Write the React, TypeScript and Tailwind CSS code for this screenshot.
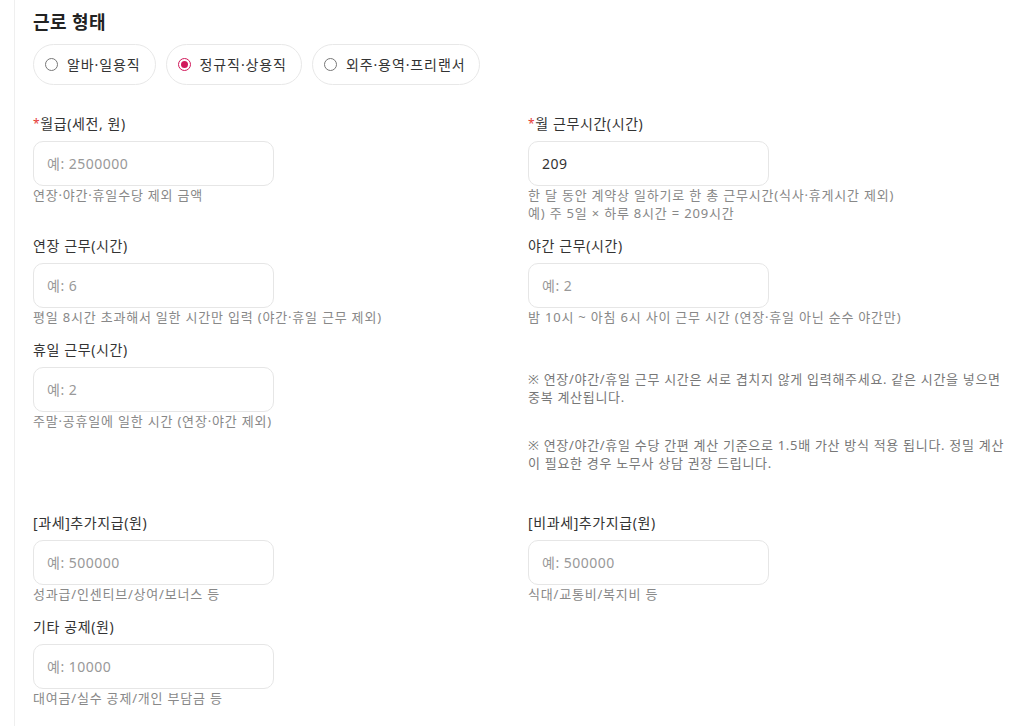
import { useState } from "react";

type Field = {
  label: string;
  required?: boolean;
  placeholder: string;
  value?: string;
  help?: string[];
};

function FieldBox({ field }: { field: Field }) {
  const [value, setValue] = useState(field.value ?? "");
  return (
    <div className="flex flex-col">
      <label className="text-[14px] leading-5 text-[#333] tracking-[0.6px]">
        {field.required && <span className="text-[#e53935] text-[12px] align-top">*</span>}
        {field.label}
      </label>
      <input
        type="text"
        value={value}
        onChange={(e) => setValue(e.target.value)}
        placeholder={field.placeholder}
        className="mt-[7px] w-[241px] h-[45px] rounded-[10px] border border-[#e6e6e6] bg-white px-[13px] text-[14px] tracking-[0.5px] text-[#333] placeholder:text-[#999] outline-none"
      />
      {field.help && (
        <div className="text-[13px] leading-[18px] tracking-[0.8px] text-[#888]">
          {field.help.map((h) => (
            <p key={h}>{h}</p>
          ))}
        </div>
      )}
    </div>
  );
}

const types = ["알바·일용직", "정규직·상용직", "외주·용역·프리랜서"];

export default function App() {
  const [type, setType] = useState("정규직·상용직");

  return (
    <div
      className="min-h-screen bg-white pl-[14px]"
      style={{ fontFamily: '"Noto Sans", "Noto Sans CJK KR", sans-serif' }}
    >
      <div className="min-h-[726px] border-l border-[#efefef] pl-[18px] pr-4 pt-[10px] pb-6">
        <h2 className="text-[18px] leading-6 font-bold tracking-[0.4px] text-[#222]">근로 형태</h2>

        <div className="mt-[10px] flex gap-[10px]">
          {types.map((t) => {
            const active = t === type;
            return (
              <button
                key={t}
                onClick={() => setType(t)}
                className="flex h-[41px] items-center gap-[9px] rounded-full border border-[#e8e8e8] bg-white pl-[11px] pr-[14px] text-[14px] tracking-[0.9px] text-[#333]"
              >
                <span
                  className={
                    active
                      ? "flex h-[13px] w-[13px] items-center justify-center rounded-full border-[1.5px] border-[#d1185a]"
                      : "h-[13px] w-[13px] rounded-full border-[1.5px] border-[#777]"
                  }
                >
                  {active && <span className="h-[7px] w-[7px] rounded-full bg-[#d1185a]" />}
                </span>
                {t}
              </button>
            );
          })}
        </div>

        <div className="mt-[29px] grid grid-cols-[475px_1fr] gap-x-5 gap-y-[14px]">
          <FieldBox field={{ label: "월급(세전, 원)", required: true, placeholder: "예: 2500000", help: ["연장·야간·휴일수당 제외 금액"] }} />
          <FieldBox
            field={{
              label: "월 근무시간(시간)",
              required: true,
              placeholder: "예: 209",
              value: "209",
              help: ["한 달 동안 계약상 일하기로 한 총 근무시간(식사·휴게시간 제외)", "예) 주 5일 × 하루 8시간 = 209시간"],
            }}
          />
          <FieldBox field={{ label: "연장 근무(시간)", placeholder: "예: 6", help: ["평일 8시간 초과해서 일한 시간만 입력 (야간·휴일 근무 제외)"] }} />
          <FieldBox field={{ label: "야간 근무(시간)", placeholder: "예: 2", help: ["밤 10시 ~ 아침 6시 사이 근무 시간 (연장·휴일 아닌 순수 야간만)"] }} />
          <FieldBox field={{ label: "휴일 근무(시간)", placeholder: "예: 2", help: ["주말·공휴일에 일한 시간 (연장·야간 제외)"] }} />
          <div className="pt-[30px] text-[13px] leading-[18px] tracking-[0.7px] text-[#777] flex flex-col gap-[30px]">
            <p>※ 연장/야간/휴일 근무 시간은 서로 겹치지 않게 입력해주세요. 같은 시간을 넣으면 중복 계산됩니다.</p>
            <p>※ 연장/야간/휴일 수당 간편 계산 기준으로 1.5배 가산 방식 적용 됩니다. 정밀 계산이 필요한 경우 노무사 상담 권장 드립니다.</p>
          </div>
        </div>

        <div className="mt-[41px] grid grid-cols-[475px_1fr] gap-x-5 gap-y-[14px]">
          <FieldBox field={{ label: "[과세]추가지급(원)", placeholder: "예: 500000", help: ["성과급/인센티브/상여/보너스 등"] }} />
          <FieldBox field={{ label: "[비과세]추가지급(원)", placeholder: "예: 500000", help: ["식대/교통비/복지비 등"] }} />
          <FieldBox field={{ label: "기타 공제(원)", placeholder: "예: 10000", help: ["대여금/실수 공제/개인 부담금 등"] }} />
        </div>
      </div>
    </div>
  );
}
